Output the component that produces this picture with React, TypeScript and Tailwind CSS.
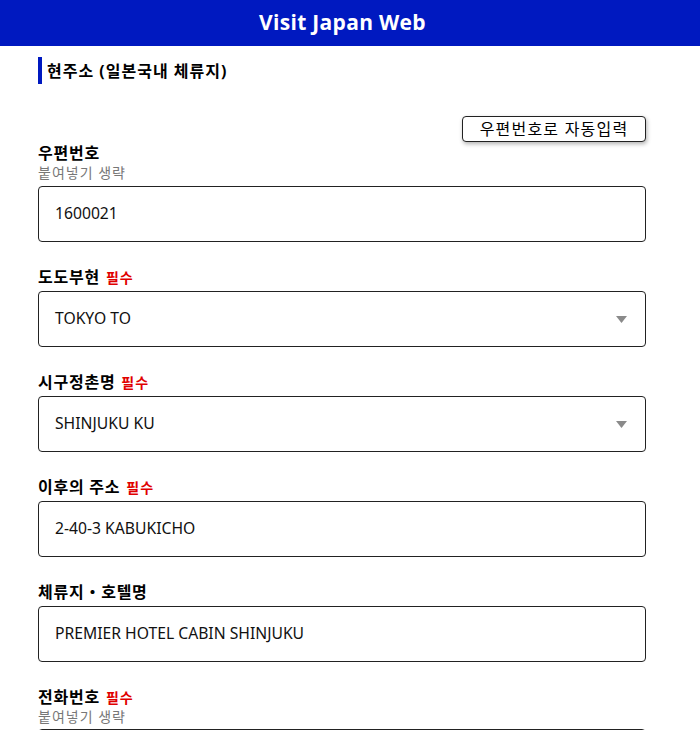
import React from 'react';

const font = { fontFamily: '"Noto Sans", "Noto Sans CJK KR", sans-serif' };

function Label({ text, required }: { text: string; required?: boolean }) {
  return (
    <div className="flex items-baseline gap-[6px] h-5 leading-5">
      <span className="text-[16px] font-bold text-black tracking-[0.75px]">{text}</span>
      {required && <span className="text-[14px] font-bold text-[#e00000] tracking-[1px]">필수</span>}
    </div>
  );
}

function Hint() {
  return <div className="text-[14px] leading-5 text-[#777] tracking-[1px]">붙여넣기 생략</div>;
}

function Box({ value, select }: { value: string; select?: boolean }) {
  return (
    <div className="h-[56px] w-full rounded-[4px] border border-[#222] flex items-center justify-between pl-4 pr-4">
      <span className="text-[15.7px] text-[#111]">{value}</span>
      {select && (
        <svg width="11" height="7" viewBox="0 0 11 7" className="mr-[2px]">
          <polygon points="0,0 11,0 5.5,7" fill="#8a8a8a" />
        </svg>
      )}
    </div>
  );
}

export default function App() {
  return (
    <div className="w-[700px] h-[730px] overflow-hidden bg-white" style={font}>
      <header className="h-[46px] bg-[#0019c0] flex items-center justify-center pr-[15px]">
        <h1 className="text-white text-[21px] font-bold tracking-[0.3px]" style={{ fontFamily: '"Open Sans", sans-serif' }}>
          Visit Japan Web
        </h1>
      </header>

      <div className="px-[38px] w-[684px]">
        <div className="mt-[11px] flex items-center h-[27px] border-l-4 border-[#0019c0] pl-[5px]">
          <span className="text-[16px] font-bold text-black tracking-[1px]">현주소 (일본국내 체류지)</span>
        </div>

        <div className="mt-[32px] flex justify-end">
          <button className="h-[26px] w-[184px] rounded-[4px] border border-[#222] bg-white text-[16px] text-black shadow-[1px_2px_4px_rgba(0,0,0,0.3)] leading-none tracking-[1.2px]">
            우편번호로 자동입력
          </button>
        </div>

        <div className="mt-[1px]">
          <Label text="우편번호" />
          <Hint />
          <div className="mt-[3px]">
            <Box value="1600021" />
          </div>
        </div>

        <div className="mt-[25px]">
          <Label text="도도부현" required />
          <div className="mt-[4px]">
            <Box value="TOKYO TO" select />
          </div>
        </div>

        <div className="mt-[25px]">
          <Label text="시구정촌명" required />
          <div className="mt-[4px]">
            <Box value="SHINJUKU KU" select />
          </div>
        </div>

        <div className="mt-[25px]">
          <Label text="이후의 주소" required />
          <div className="mt-[4px]">
            <Box value="2-40-3 KABUKICHO" />
          </div>
        </div>

        <div className="mt-[25px]">
          <Label text="체류지・호텔명" />
          <div className="mt-[4px]">
            <Box value="PREMIER HOTEL CABIN SHINJUKU" />
          </div>
        </div>

        <div className="mt-[25px]">
          <Label text="전화번호" required />
          <Hint />
          <div className="mt-[2px]">
            <Box value="" />
          </div>
        </div>
      </div>
    </div>
  );
}
